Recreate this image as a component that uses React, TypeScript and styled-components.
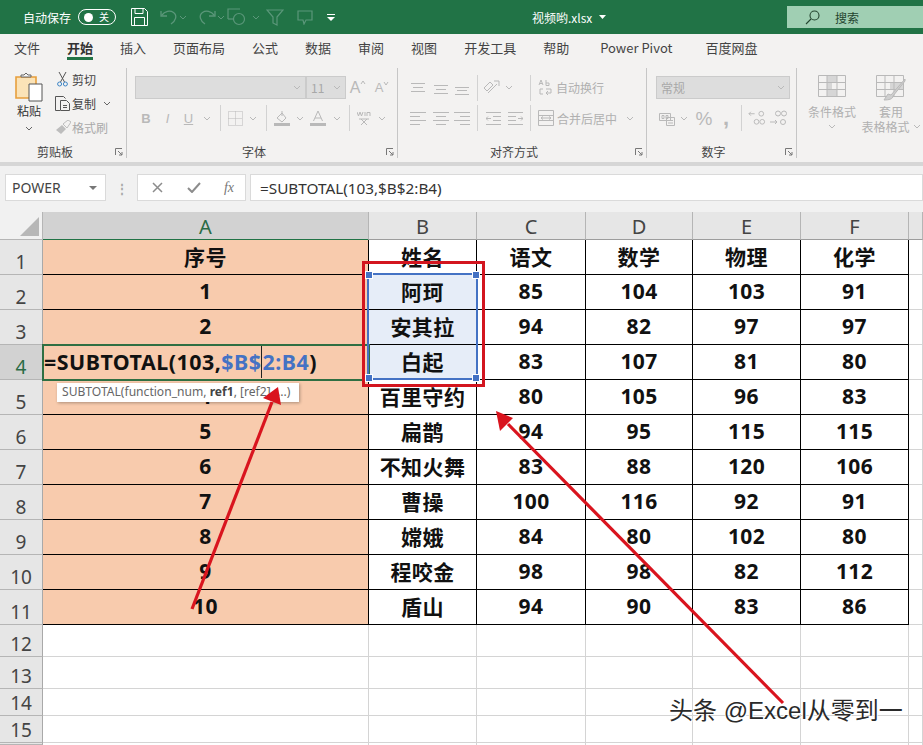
import React, { FC } from "react";
import styled, { createGlobalStyle } from "styled-components";

const GREEN = "#217346";
const DIM_GREEN = "#5b977a";
const OFF = "#b9b9b9";
const INK = "#444444";
const CJK = `"Noto Sans CJK SC", "Noto Sans", sans-serif`;

const GlobalStyle = createGlobalStyle`
    html, body {
        margin: 0;
        padding: 0;
        background: #ffffff;
        font-family: ${CJK};
    }
`;

const Page = styled.div`
    position: relative;
    width: 923px;
    height: 745px;
    overflow: hidden;
    display: flex;
    flex-direction: column;
    background: #ffffff;
`;

/* ---------- title bar ---------- */
const TitleBar = styled.div`
    height: 34px;
    flex: none;
    display: flex;
    align-items: center;
    background: ${GREEN};
    color: #ffffff;
    font-size: 12px;
    padding-left: 23px;
`;

const AutoSave = styled.span`
    width: 55px;
    flex: none;
    font-size: 12px;
`;

const Toggle = styled.div`
    width: 38px;
    height: 16px;
    flex: none;
    box-sizing: border-box;
    border: 1px solid #ffffff;
    border-radius: 8px;
    display: flex;
    align-items: center;
    justify-content: space-between;
    padding: 0 6px 0 5px;
    font-size: 10px;
    line-height: 14px;
    margin-right: 15px;
`;

const Knob = styled.i`
    width: 9px;
    height: 9px;
    border-radius: 50%;
    background: #ffffff;
`;

const Slot = styled.div<{ $w: number; $h?: number }>`
    width: ${(p) => p.$w}px;
    flex: none;
    display: flex;
    align-items: center;
    justify-content: center;
    height: ${(p) => (p.$h ? `${p.$h}px` : "100%")};
`;

const FileName = styled.div`
    width: 334px;
    flex: none;
    display: flex;
    align-items: center;
    padding-left: 192px;
    box-sizing: border-box;
    font-size: 12px;
    gap: 7px;
`;

const SearchBox = styled.div`
    width: 136px;
    height: 22px;
    flex: none;
    margin-left: auto;
    background: #a0cfb3;
    color: #24452f;
    display: flex;
    align-items: center;
    gap: 15px;
    padding-left: 18px;
    box-sizing: border-box;
    font-size: 12px;
`;

/* ---------- tabs ---------- */
const TabBar = styled.div`
    height: 26px;
    flex: none;
    display: flex;
    gap: 27px;
    padding-left: 14px;
    background: #f3f2f1;
    font-size: 13px;
    color: #444444;
`;

const Tab = styled.div<{ $active?: boolean; $nudge?: number }>`
    height: 26px;
    line-height: 27px;
    box-sizing: border-box;
    margin-left: ${(p) => p.$nudge ?? 0}px;
    font-weight: ${(p) => (p.$active ? 700 : 400)};
    color: ${(p) => (p.$active ? "#333333" : "#444444")};
    border-bottom: ${(p) => (p.$active ? `3px solid ${GREEN}` : "none")};
`;

/* ---------- ribbon ---------- */
const Ribbon = styled.div`
    height: 106px;
    flex: none;
    display: flex;
    padding-top: 8px;
    box-sizing: border-box;
    background: #f3f2f1;
    border-bottom: 4px solid #d6d6d6;
`;

const Group = styled.section<{ $w: number }>`
    width: ${(p) => p.$w}px;
    height: 90px;
    flex: none;
    box-sizing: border-box;
    border-right: 1px solid #c6c6c6;
    display: flex;
    flex-direction: column;
`;

const GroupBody = styled.div<{ $pad?: number }>`
    height: 77px;
    flex: none;
    padding-left: ${(p) => p.$pad ?? 0}px;
    display: flex;
    flex-direction: column;
`;

const GroupBodyRow = styled(GroupBody)`
    flex-direction: row;
`;

const GroupLabel = styled.div`
    position: relative;
    height: 14px;
    line-height: 14px;
    padding-right: 16px;
    text-align: center;
    font-size: 12px;
    color: #444444;
`;

const Launcher = styled.svg`
    position: absolute;
    right: 3px;
    top: 3px;
`;

const TopRow = styled.div`
    height: 23px;
    margin-top: 8px;
    display: flex;
    align-items: center;
    flex: none;
`;

const BottomRow = styled.div`
    height: 24px;
    margin-top: 7px;
    display: flex;
    align-items: center;
    flex: none;
`;

const Sep = styled.div`
    width: 1px;
    height: 26px;
    background: #d2d2d2;
    flex: none;
`;

const SepSlot: FC<{ w: number }> = ({ w }) => (
    <Slot $w={w}>
        <Sep />
    </Slot>
);

const PasteCol = styled.div`
    width: 53px;
    flex: none;
    display: flex;
    flex-direction: column;
    align-items: center;
    padding: 4px 0 0 5px;
    box-sizing: border-box;
    font-size: 12px;
    line-height: 14px;
    color: #333333;
    gap: 2px;
`;

const PasteChev = styled.div`
    margin-top: 6px;
    display: flex;
`;

const SmallCol = styled.div`
    display: flex;
    flex-direction: column;
    margin-top: -1px;
`;

const SmallRow = styled.div<{ $off?: boolean }>`
    height: 24px;
    display: flex;
    align-items: center;
    font-size: 12px;
    color: ${(p) => (p.$off ? "#a9a9a9" : "#444444")};
`;

const SmallIcon = styled.div`
    width: 19px;
    flex: none;
    display: flex;
    justify-content: center;
`;

const Combo = styled.div<{ $w: number }>`
    width: ${(p) => p.$w}px;
    height: 23px;
    flex: none;
    box-sizing: border-box;
    background: #dddddd;
    border: 1px solid #cbcbcb;
    display: flex;
    align-items: center;
    justify-content: space-between;
    padding: 0 4px;
    font-size: 12px;
    color: #a8a8a8;
`;

const OffText = styled.span`
    font-size: 12px;
    color: #b0b0b0;
    white-space: nowrap;
`;

const Glyph = styled.span<{ $size: number; $weight?: number; $italic?: boolean; $under?: boolean }>`
    font-family: "Liberation Sans", sans-serif;
    font-size: ${(p) => p.$size}px;
    font-weight: ${(p) => p.$weight ?? 400};
    font-style: ${(p) => (p.$italic ? "italic" : "normal")};
    text-decoration: ${(p) => (p.$under ? "underline" : "none")};
    color: ${OFF};
    line-height: 1;
`;

const StyleBtn = styled.div<{ $w: number }>`
    width: ${(p) => p.$w}px;
    flex: none;
    display: flex;
    flex-direction: column;
    align-items: center;
    padding-top: 7px;
    box-sizing: border-box;
    font-size: 12px;
    line-height: 15px;
    color: #b0b0b0;
    white-space: nowrap;
`;

const StyleIcon = styled.div`
    height: 28px;
    margin-bottom: 1px;
`;

const InlineRow = styled.div`
    display: flex;
    align-items: center;
    gap: 3px;
`;

const GrowWrap = styled.div`
    display: flex;
    align-items: flex-start;
`;

/* ---------- formula bar ---------- */
const FormulaBar = styled.div`
    height: 46px;
    flex: none;
    background: #f1f1f1;
    display: flex;
    padding: 8px 0 11px 5px;
    box-sizing: border-box;
`;

const WhiteBox = styled.div<{ $w?: number }>`
    ${(p) => (p.$w ? `width: ${p.$w}px; flex: none;` : "flex: 1;")}
    box-sizing: border-box;
    background: #ffffff;
    border: 1px solid #dadada;
    display: flex;
    align-items: center;
`;

const NameBox = styled(WhiteBox)`
    justify-content: space-between;
    padding: 0 8px 0 6px;
    font-family: "Noto Sans", sans-serif;
    font-size: 14px;
    color: #444444;
`;

const Dots = styled.div`
    width: 31px;
    flex: none;
    display: flex;
    align-items: center;
    justify-content: center;
    color: #a8a8a8;
    font-size: 12px;
    font-weight: 700;
`;

const FxBox = styled(WhiteBox)`
    margin-right: 4px;
    padding-left: 9px;
`;

const FormulaInput = styled(WhiteBox)`
    padding-left: 9px;
    font-family: "Noto Sans", sans-serif;
    font-size: 15.3px;
    color: #333333;
`;

const Fx = styled.span`
    font-family: "Liberation Serif", serif;
    font-style: italic;
    font-size: 14px;
    color: #777777;
`;

/* ---------- sheet ---------- */
const Sheet = styled.div`
    flex: 1;
    display: grid;
    grid-template-columns: 43px 326px 108px 109px 107px 108px 108px 14px;
    grid-template-rows: 28px repeat(11, 35px) 32px 32px 27px 27px 2px;
    background: #ffffff;
`;

const Corner = styled.div`
    background: #f1f1f1;
    border-right: 1px solid #b5b5b5;
    border-bottom: 1px solid #b5b5b5;
    box-sizing: border-box;
    display: flex;
    align-items: flex-end;
    justify-content: flex-end;
    padding: 0 3px 3px 0;
`;

const Triangle = styled.i`
    width: 19px;
    height: 19px;
    background: #b7b7b7;
    clip-path: polygon(100% 0, 100% 100%, 0 100%);
`;

const ColHead = styled.div<{ $active?: boolean }>`
    box-sizing: border-box;
    background: ${(p) => (p.$active ? "#d2d2d2" : "#e6e6e6")};
    border-right: 1px solid #b5b5b5;
    border-bottom: ${(p) => (p.$active ? `2px solid ${GREEN}` : "1px solid #9d9d9d")};
    display: flex;
    align-items: flex-start;
    justify-content: center;
    padding-top: 4px;
    font-family: "Noto Sans", sans-serif;
    font-size: 20px;
    line-height: 22px;
    margin-bottom: ${(p) => (p.$active ? "-1px" : "0")};
    color: ${(p) => (p.$active ? "#2a6b45" : INK)};
`;

const RowHead = styled.div<{ $active?: boolean }>`
    box-sizing: border-box;
    background: ${(p) => (p.$active ? "#d2d2d2" : "#e6e6e6")};
    border-right: 1px solid #a9a9a9;
    border-bottom: 1px solid #b5b5b5;
    display: flex;
    align-items: flex-end;
    justify-content: center;
    font-family: "Noto Sans", sans-serif;
    font-size: 19px;
    line-height: 24px;
    color: ${(p) => (p.$active ? "#2a6b45" : INK)};
    overflow: hidden;
`;

const Cell = styled.div<{ $fill?: string; $bold?: boolean }>`
    box-sizing: border-box;
    background: ${(p) => p.$fill ?? "#ffffff"};
    border-right: 1px solid ${(p) => (p.$bold ? "#000000" : "#d4d4d4")};
    border-bottom: 1px solid ${(p) => (p.$bold ? "#000000" : "#d4d4d4")};
    padding-bottom: 2px;
    display: flex;
    align-items: center;
    justify-content: center;
    font-family: "Noto Sans", "Noto Sans CJK SC", sans-serif;
    font-size: 21px;
    font-weight: 700;
    letter-spacing: 0.4px;
    color: #111111;
    white-space: nowrap;
`;

const EditCell = styled(Cell)`
    position: relative;
    z-index: 1;
    justify-content: flex-start;
    padding-left: 1px;
    letter-spacing: 0.5px;
    font-size: 21.4px;
    outline: 2px solid #2f6f42;
    outline-offset: -1px;
`;

const RefText = styled.span`
    color: #4472c4;
`;

const Caret = styled.i`
    display: inline-block;
    width: 1px;
    height: 34px;
    margin: -8px 0;
    vertical-align: middle;
    background: #222222;
`;

/* ---------- things lying over the sheet ---------- */
const ArgTip = styled.div`
    position: absolute;
    left: 57px;
    top: 383px;
    width: 242px;
    height: 19px;
    z-index: 2;
    box-sizing: border-box;
    padding-left: 5px;
    background: #ffffff;
    box-shadow: 1px 1px 3px rgba(0, 0, 0, 0.3);
    font-family: "Noto Sans", sans-serif;
    font-size: 12.1px;
    line-height: 18px;
    color: #666666;
    white-space: nowrap;
    b {
        color: #444444;
    }
`;

const RefRange = styled.div`
    position: absolute;
    left: 367px;
    top: 273px;
    width: 111px;
    height: 107px;
    z-index: 2;
    box-sizing: border-box;
    border: 2px solid #4472c4;
`;

const Handle = styled.i<{ $x: "left" | "right"; $y: "top" | "bottom" }>`
    position: absolute;
    ${(p) => p.$x}: -4px;
    ${(p) => p.$y}: -4px;
    width: 6px;
    height: 6px;
    background: #4472c4;
    border: 1px solid #ffffff;
`;

const RedBox = styled.div`
    position: absolute;
    left: 362px;
    top: 261px;
    width: 123px;
    height: 126px;
    z-index: 3;
    box-sizing: border-box;
    border: 3.5px solid #d3151f;
`;

const Arrows = styled.svg`
    position: absolute;
    left: 0;
    top: 0;
    z-index: 4;
    pointer-events: none;
`;

const Watermark = styled.div`
    position: absolute;
    left: 669px;
    top: 696px;
    z-index: 5;
    font-family: "Liberation Sans", "Noto Sans CJK SC", sans-serif;
    font-size: 24px;
    line-height: 30px;
    color: #2a2a2a;
    white-space: nowrap;
    text-shadow: 1px 1px 0 #ffffff, -1px -1px 0 #ffffff;
`;

/* ---------- icons ---------- */
const Chev: FC<{ color?: string }> = ({ color = OFF }) => (
    <svg width="8" height="5" viewBox="0 0 8 5">
        <path d="M1 1l3 3 3-3" fill="none" stroke={color} strokeWidth="1" />
    </svg>
);

const Lines: FC<{ rows: [number, number, number][]; color?: string }> = ({ rows, color = OFF }) => (
    <svg width="16" height="14" viewBox="0 0 16 14">
        {rows.map(([a, b, y]) => (
            <path key={y} d={`M${a} ${y + 0.5}H${b}`} stroke={color} />
        ))}
    </svg>
);

const SaveIcon = () => (
    <svg width="17" height="18" viewBox="0 0 17 18" fill="none" stroke="#ffffff" strokeWidth="1">
        <path d="M.5.5h13l3 3v14H.5z" />
        <path d="M4 .5v5h8v-5M3.5 17.5v-8h10v8" />
    </svg>
);

const MirrorSvg = styled.svg<{ $flip?: boolean }>`
    transform: ${(p) => (p.$flip ? "scaleX(-1)" : "none")};
`;

const UndoIcon: FC<{ flip?: boolean }> = ({ flip }) => (
    <MirrorSvg $flip={flip} width="18" height="16" viewBox="0 0 18 16" fill="none" stroke={DIM_GREEN} strokeWidth="1.3">
        <path d="M1 2v5h6" />
        <path d="M1.5 6.5C5 2 10 1 13.5 3.5c4 3 2.5 8-2.5 11.5" />
    </MirrorSvg>
);

const ShapeIcon = () => (
    <svg width="22" height="18" viewBox="0 0 22 18" fill="none" stroke={DIM_GREEN} strokeWidth="1.2">
        <path d="M1 11V1h12" />
        <path d="M1 11h5" />
        <circle cx="12" cy="11" r="5.5" />
    </svg>
);

const FunnelIcon = () => (
    <svg width="18" height="17" viewBox="0 0 18 17" fill="none" stroke={DIM_GREEN} strokeWidth="1.2">
        <path d="M1 1h16l-6 7v8l-4-2V8z" />
    </svg>
);

const NoteIcon = () => (
    <svg width="16" height="15" viewBox="0 0 16 15" fill="none" stroke={DIM_GREEN} strokeWidth="1.2">
        <path d="M1 1h14v9H9l-2 4-1-4H1z" />
    </svg>
);

const MoreIcon = () => (
    <svg width="8" height="7" viewBox="0 0 8 7" fill="#ffffff">
        <path d="M0 0h8v1H0z" />
        <path d="M0 3h8L4 7z" />
    </svg>
);

const FileCaret = () => (
    <svg width="7" height="4" viewBox="0 0 7 4" fill="#ffffff">
        <path d="M0 0h7L3.5 4z" />
    </svg>
);

const SearchIcon = () => (
    <svg width="15" height="15" viewBox="0 0 15 15" fill="none" stroke="#24452f" strokeWidth="1.1">
        <circle cx="9.5" cy="5.5" r="4.5" />
        <path d="M6 9l-5 5" />
    </svg>
);

const PasteIcon = () => (
    <svg width="28" height="30" viewBox="0 0 28 30">
        <path d="M1 5h20v21H1z" fill="#fbe3b7" stroke="#e79f3c" strokeWidth="1.6" />
        <path d="M6 5h10V3h-3l-2-2-2 2H6z" fill="#f5f5f5" stroke="#666666" />
        <path d="M14 12h13v17H14z" fill="#ffffff" stroke="#555555" />
    </svg>
);

const CutIcon = () => (
    <svg width="11" height="16" viewBox="0 0 11 16" fill="none">
        <path d="M2 1l5.5 10M9 1L3.5 11" stroke="#555555" />
        <circle cx="2.6" cy="13" r="2" stroke="#3d85c6" />
        <circle cx="8.4" cy="13" r="2" stroke="#3d85c6" />
    </svg>
);

const CopyIcon = () => (
    <svg width="16" height="15" viewBox="0 0 16 15" fill="none" stroke="#555555">
        <path d="M5 14.5H.5V.5h8l2 2" />
        <path d="M5.5 4.5h6l3 3v7h-9z" />
        <path d="M8 9.5h4M8 11.5h4" />
    </svg>
);

const BrushIcon = () => (
    <svg width="16" height="15" viewBox="0 0 16 15" fill="#bdbdbd">
        <path d="M1 10l6-5 4 4-5 5z" />
        <path d="M8 4l5-4 3 2-4 6z" fill="none" stroke="#bdbdbd" />
    </svg>
);

const GrowIcon: FC<{ up?: boolean; size: number }> = ({ up, size }) => (
    <GrowWrap>
        <Glyph $size={size}>A</Glyph>
        <svg width="6" height="5" viewBox="0 0 6 5">
            <path d={up ? "M1 4l2-3 2 3" : "M1 1l2 3 2-3"} fill="none" stroke={OFF} />
        </svg>
    </GrowWrap>
);

const BorderIcon = () => (
    <svg width="15" height="15" viewBox="0 0 15 15" fill="none" stroke={OFF}>
        <path d="M.5.5h14v14H.5z" strokeDasharray="1 1" />
        <path d="M7.5.5v14M.5 7.5h14" strokeDasharray="1 1" />
    </svg>
);

const FillIcon = () => (
    <svg width="16" height="16" viewBox="0 0 16 16" fill="none" stroke={OFF}>
        <path d="M3 8l5-5 4 5-4 4z" />
        <path d="M8 1v5" />
        <path d="M0 14.5h16" strokeWidth="3" />
    </svg>
);

const FontColorIcon = () => (
    <svg width="16" height="16" viewBox="0 0 16 16" fill="none" stroke={OFF}>
        <path d="M3.5 11L8 1l4.5 10M5 8h6" />
        <path d="M0 14.5h16" strokeWidth="3" />
    </svg>
);

const WenIcon = () => (
    <svg width="14" height="16" viewBox="0 0 14 16" fill="none" stroke={OFF}>
        <path d="M0 2l1.5 4L3 2l1.5 4L6 2M8 2v4M10 6V2.5h3V6" />
        <path d="M2 9h10M4 9l6 6M10 9l-6 6" />
    </svg>
);

const OrientIcon = () => (
    <svg width="20" height="16" viewBox="0 0 20 16" fill="none" stroke={OFF}>
        <path d="M1 8l6-6 3 3-6 6zM5 13l9-9M11 1h5v5" />
    </svg>
);

const WrapIcon = () => (
    <svg width="16" height="18" viewBox="0 0 16 18" fill="none" stroke={OFF}>
        <path d="M1 6l2-5 2 5M2 4.5h2M8 1v5.5M8 4h3v2.5H8" />
        <path d="M5 10H2v5h3M8 10h5v4H8M10 12l-2 2 2 2" />
    </svg>
);

const MergeIcon = () => (
    <svg width="16" height="16" viewBox="0 0 16 16" fill="none" stroke={OFF}>
        <path d="M.5.5h15v15H.5zM.5 5.5h15M.5 10.5h15" />
        <path d="M3 8h10M5 6.5L3 8l2 1.5M11 6.5L13 8l-2 1.5" />
    </svg>
);

const IndentIcon: FC<{ flip?: boolean }> = ({ flip }) => (
    <MirrorSvg $flip={flip} width="15" height="13" viewBox="0 0 15 13" fill="none" stroke={OFF}>
        <path d="M0 .5h15M7 4.5h8M7 8.5h8M0 12.5h15M5 6.5H0M2 4.5l-2 2 2 2" />
    </MirrorSvg>
);

const MoneyIcon = () => (
    <svg width="16" height="15" viewBox="0 0 16 15" fill="none" stroke={OFF}>
        <path d="M.5 2.5h11v7H.5zM3 4.5h2v3H3zM7 4.5h2v3H7z" />
        <path d="M7.5 6.5h8v8h-8zM9 9.5h5M9 12h5" />
    </svg>
);

const DecimalIcon: FC<{ more?: boolean }> = ({ more }) => (
    <svg width="19" height="16" viewBox="0 0 19 16" fill="none" stroke={OFF}>
        {more ? (
            <>
                <path d="M7 3.5H1M3 1.5l-2 2 2 2" />
                <circle cx="14" cy="3.5" r="2.5" />
                <circle cx="9" cy="12" r="2.5" />
                <circle cx="15" cy="12" r="2.5" />
            </>
        ) : (
            <>
                <circle cx="9" cy="3.5" r="2.5" />
                <circle cx="15" cy="3.5" r="2.5" />
                <path d="M1 12h7M6 10l2 2-2 2" />
                <circle cx="14" cy="12" r="2.5" />
            </>
        )}
    </svg>
);

const CondIcon = () => (
    <svg width="28" height="22" viewBox="0 0 28 22">
        <path d="M9 1h10v7H9zM9 8h5v7H9zM9 15h10v6H9z" fill="#d6d6d6" />
        <path d="M.5.5h27v21H.5zM.5 7.5h27M.5 14.5h27M9 .5v21M19 .5v21" fill="none" stroke={OFF} />
    </svg>
);

const TableIcon = () => (
    <svg width="30" height="26" viewBox="0 0 30 26">
        <path d="M14 8h13v7H14z" fill="#d6d6d6" />
        <path d="M.5.5h27v21H.5zM.5 7.5h27M.5 14.5h27M9 .5v21M18 .5v21" fill="none" stroke={OFF} />
        <path d="M29 4L15 20l-3-1-4 6c5 0 9-1 9-4l12-15z" fill="#cfcfcf" stroke={OFF} />
    </svg>
);

const LauncherIcon = () => (
    <Launcher width="8" height="8" viewBox="0 0 8 8" fill="none" stroke="#777777">
        <path d="M.5 7V.5H7M3 3l4 4M7 4v3H4" />
    </Launcher>
);

const CheckIcon = () => (
    <svg width="14" height="11" viewBox="0 0 14 11" fill="none" stroke="#8c8c8c" strokeWidth="2">
        <path d="M1 6l4 4 8-9" />
    </svg>
);

const CrossIcon = () => (
    <svg width="11" height="11" viewBox="0 0 11 11" fill="none" stroke="#8c8c8c" strokeWidth="1.5">
        <path d="M1 1l9 9M10 1l-9 9" />
    </svg>
);

const CaretDown = () => (
    <svg width="8" height="4" viewBox="0 0 8 4" fill="#777777">
        <path d="M0 0h8L4 4z" />
    </svg>
);

/* ---------- data ---------- */
const tabs: [string, number][] = [
    ["文件", 0], ["开始", 0], ["插入", 0], ["页面布局", 0], ["公式", 0], ["数据", 0], ["审阅", 0],
    ["视图", 0], ["开发工具", 0], ["帮助", 0], ["Power Pivot", 4], ["百度网盘", 6],
];
const columns = ["A", "B", "C", "D", "E", "F", ""];
const people: [string, number, number, number, number][] = [
    ["阿珂", 85, 104, 103, 91],
    ["安其拉", 94, 82, 97, 97],
    ["白起", 83, 107, 81, 80],
    ["百里守约", 80, 105, 96, 83],
    ["扁鹊", 94, 95, 115, 115],
    ["不知火舞", 83, 88, 120, 106],
    ["曹操", 100, 116, 92, 91],
    ["嫦娥", 84, 80, 102, 80],
    ["程咬金", 98, 98, 82, 112],
    ["盾山", 94, 90, 83, 86],
];

const PEACH = "#f8cbad";
const PICKED = "#e6edf8";

const App: FC = () => (
    <Page>
        <GlobalStyle />
        <TitleBar>
            <AutoSave>自动保存</AutoSave>
            <Toggle>
                <Knob />关
            </Toggle>
            <Slot $w={17}><SaveIcon /></Slot>
            <Slot $w={12} />
            <Slot $w={18}><UndoIcon /></Slot>
            <Slot $w={10}><Chev color={DIM_GREEN} /></Slot>
            <Slot $w={10} />
            <Slot $w={18}><UndoIcon flip /></Slot>
            <Slot $w={10}><Chev color={DIM_GREEN} /></Slot>
            <Slot $w={24}><ShapeIcon /></Slot>
            <Slot $w={12}><Chev color={DIM_GREEN} /></Slot>
            <Slot $w={26}><FunnelIcon /></Slot>
            <Slot $w={34}><NoteIcon /></Slot>
            <Slot $w={18}><MoreIcon /></Slot>
            <FileName>
                视频哟.xlsx
                <FileCaret />
            </FileName>
            <SearchBox>
                <SearchIcon />
                搜索
            </SearchBox>
        </TitleBar>

        <TabBar>
            {tabs.map(([t, nudge]) => (
                <Tab key={t} $active={t === "开始"} $nudge={nudge}>{t}</Tab>
            ))}
        </TabBar>

        <Ribbon>
            <Group $w={127}>
                <GroupBodyRow>
                    <PasteCol>
                        <PasteIcon />
                        粘贴
                        <PasteChev><Chev color="#666666" /></PasteChev>
                    </PasteCol>
                    <SmallCol>
                        <SmallRow><SmallIcon><CutIcon /></SmallIcon>剪切</SmallRow>
                        <SmallRow>
                            <SmallIcon><CopyIcon /></SmallIcon>复制
                            <Slot $w={22}><Chev color="#666666" /></Slot>
                        </SmallRow>
                        <SmallRow $off><SmallIcon><BrushIcon /></SmallIcon>格式刷</SmallRow>
                    </SmallCol>
                </GroupBodyRow>
                <GroupLabel>剪贴板<LauncherIcon /></GroupLabel>
            </Group>

            <Group $w={271}>
                <GroupBody $pad={8}>
                    <TopRow>
                        <Combo $w={171}><span /><Chev /></Combo>
                        <Combo $w={40}>11<Chev /></Combo>
                        <Slot $w={24}><GrowIcon up size={16} /></Slot>
                        <Slot $w={24}><GrowIcon size={13} /></Slot>
                    </TopRow>
                    <BottomRow>
                        <Slot $w={22}><Glyph $size={13} $weight={700}>B</Glyph></Slot>
                        <Slot $w={21}><Glyph $size={13} $italic>I</Glyph></Slot>
                        <Slot $w={21}><Glyph $size={13} $under>U</Glyph></Slot>
                        <Slot $w={16}><Chev /></Slot>
                        <SepSlot w={11} />
                        <Slot $w={19}><BorderIcon /></Slot>
                        <Slot $w={16}><Chev /></Slot>
                        <SepSlot w={11} />
                        <Slot $w={20}><FillIcon /></Slot>
                        <Slot $w={15}><Chev /></Slot>
                        <Slot $w={22}><FontColorIcon /></Slot>
                        <Slot $w={16}><Chev /></Slot>
                        <SepSlot w={9} />
                        <Slot $w={20}><WenIcon /></Slot>
                        <Slot $w={16}><Chev /></Slot>
                    </BottomRow>
                </GroupBody>
                <GroupLabel>字体<LauncherIcon /></GroupLabel>
            </Group>

            <Group $w={249}>
                <GroupBody $pad={8}>
                    <TopRow>
                        <Slot $w={24}><Lines rows={[[1, 15, 2], [3, 13, 6], [1, 15, 10]]} /></Slot>
                        <Slot $w={22}><Lines rows={[[1, 15, 4], [3, 13, 8], [1, 15, 12]]} /></Slot>
                        <Slot $w={20}><Lines rows={[[1, 15, 6], [3, 13, 9], [1, 15, 13]]} /></Slot>
                        <SepSlot w={10} />
                        <Slot $w={22}><OrientIcon /></Slot>
                        <Slot $w={10}><Chev /></Slot>
                        <Slot $w={11} />
                        <SepSlot w={10} />
                        <Slot $w={21}><WrapIcon /></Slot>
                        <OffText>自动换行</OffText>
                    </TopRow>
                    <BottomRow>
                        <Slot $w={24}><Lines rows={[[0, 16, 1], [0, 10, 5], [0, 16, 9], [0, 10, 13]]} /></Slot>
                        <Slot $w={22}><Lines rows={[[0, 16, 1], [3, 13, 5], [0, 16, 9], [3, 13, 13]]} /></Slot>
                        <Slot $w={20}><Lines rows={[[0, 16, 1], [6, 16, 5], [0, 16, 9], [6, 16, 13]]} /></Slot>
                        <SepSlot w={10} />
                        <Slot $w={22}><IndentIcon /></Slot>
                        <Slot $w={22}><IndentIcon flip /></Slot>
                        <SepSlot w={8} />
                        <Slot $w={23}><MergeIcon /></Slot>
                        <OffText>合并后居中</OffText>
                        <Slot $w={26}><Chev /></Slot>
                    </BottomRow>
                </GroupBody>
                <GroupLabel>对齐方式<LauncherIcon /></GroupLabel>
            </Group>

            <Group $w={150}>
                <GroupBody $pad={9}>
                    <TopRow>
                        <Combo $w={134}>常规<Chev /></Combo>
                    </TopRow>
                    <BottomRow>
                        <Slot $w={22}><MoneyIcon /></Slot>
                        <Slot $w={12}><Chev /></Slot>
                        <Slot $w={28}><Glyph $size={19}>%</Glyph></Slot>
                        <Slot $w={16}><Glyph $size={22} $weight={700}>,</Glyph></Slot>
                        <SepSlot w={14} />
                        <Slot $w={18}><DecimalIcon more /></Slot>
                        <Slot $w={24}><DecimalIcon /></Slot>
                    </BottomRow>
                </GroupBody>
                <GroupLabel>数字<LauncherIcon /></GroupLabel>
            </Group>

            <GroupBodyRow $pad={6}>
                <StyleBtn $w={58}>
                    <StyleIcon><CondIcon /></StyleIcon>
                    条件格式
                    <Slot $w={12} $h={15}><Chev /></Slot>
                </StyleBtn>
                <StyleBtn $w={60}>
                    <StyleIcon><TableIcon /></StyleIcon>
                    套用
                    <InlineRow>表格格式<Chev /></InlineRow>
                </StyleBtn>
            </GroupBodyRow>
        </Ribbon>

        <FormulaBar>
            <NameBox $w={101}>POWER<CaretDown /></NameBox>
            <Dots>⋮</Dots>
            <FxBox $w={109}>
                <Slot $w={20}><CrossIcon /></Slot>
                <Slot $w={18} />
                <Slot $w={18}><CheckIcon /></Slot>
                <Slot $w={18} />
                <Slot $w={16}><Fx>fx</Fx></Slot>
            </FxBox>
            <FormulaInput>=SUBTOTAL(103,$B$2:B4)</FormulaInput>
        </FormulaBar>

        <Sheet>
            <Corner><Triangle /></Corner>
            {columns.map((c, i) => (
                <ColHead key={i} $active={c === "A"}>{c}</ColHead>
            ))}

            <RowHead>1</RowHead>
            <Cell $fill={PEACH} $bold>序号</Cell>
            {["姓名", "语文", "数学", "物理", "化学"].map((h) => (
                <Cell key={h} $bold>{h}</Cell>
            ))}
            <Cell />

            {people.map(([name, a, b, c, d], i) => {
                const row = i + 2;
                return (
                    <React.Fragment key={name}>
                        <RowHead $active={row === 4}>{row}</RowHead>
                        {row === 4 ? (
                            <EditCell $fill={PEACH} $bold>
                                =SUBTOTAL(103,
                                <RefText>$B$</RefText>
                                <Caret />
                                <RefText>2:B4</RefText>)
                            </EditCell>
                        ) : (
                            <Cell $fill={PEACH} $bold>{i + 1}</Cell>
                        )}
                        <Cell $bold $fill={row <= 4 ? PICKED : undefined}>{name}</Cell>
                        <Cell $bold>{a}</Cell>
                        <Cell $bold>{b}</Cell>
                        <Cell $bold>{c}</Cell>
                        <Cell $bold>{d}</Cell>
                        <Cell />
                    </React.Fragment>
                );
            })}

            {[12, 13, 14, 15, 16].map((row) => (
                <React.Fragment key={row}>
                    <RowHead>{row < 16 ? row : ""}</RowHead>
                    {columns.map((c, i) => (
                        <Cell key={i} />
                    ))}
                </React.Fragment>
            ))}
        </Sheet>

        <ArgTip>
            SUBTOTAL(function_num, <b>ref1</b>, [ref2], ...)
        </ArgTip>
        <RefRange>
            <Handle $x="left" $y="top" />
            <Handle $x="right" $y="top" />
            <Handle $x="left" $y="bottom" />
            <Handle $x="right" $y="bottom" />
        </RefRange>
        <RedBox />
        <Arrows width="923" height="745" viewBox="0 0 923 745">
            <path d="M192 609L272 402" stroke="#d9141e" strokeWidth="3.2" fill="none" />
            <path d="M278 387L281 405L263 398z" fill="#d9141e" />
            <path d="M783 703L508 424" stroke="#d9141e" strokeWidth="3.2" fill="none" />
            <path d="M496 411L513 418L500 431z" fill="#d9141e" />
        </Arrows>
        <Watermark>头条 @Excel从零到一</Watermark>
    </Page>
);

export default App;
